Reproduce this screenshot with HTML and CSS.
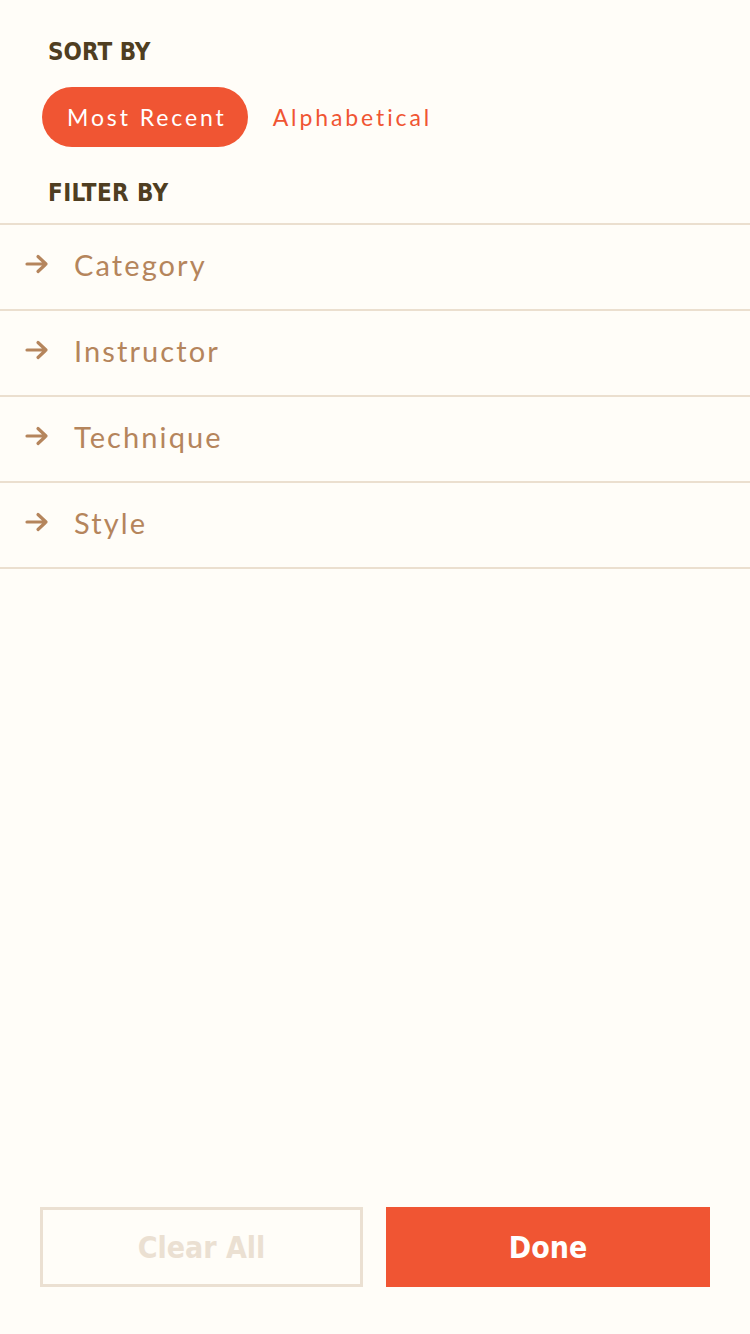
FILE: index.html
```html
<!DOCTYPE html>
<html>
<head>
<meta charset="utf-8">
<link rel="stylesheet" href="styles.css">
</head>
<body>
<div class="page">
  <div class="top">
    <h2 class="label sort-label">SORT BY</h2>
    <div class="sort-row">
      <span class="pill active">Most Recent</span>
      <span class="pill">Alphabetical</span>
    </div>
    <h2 class="label filter-label">FILTER BY</h2>
  </div>
  <ul class="filters">
    <li class="row"><svg class="arrow" viewBox="0 0 24 20"><path d="M2 10H21M13 2.5L21 10L13 17.5" fill="none" stroke="currentColor" stroke-width="3.2" stroke-linecap="round" stroke-linejoin="round"/></svg><span>Category</span></li>
    <li class="row"><svg class="arrow" viewBox="0 0 24 20"><path d="M2 10H21M13 2.5L21 10L13 17.5" fill="none" stroke="currentColor" stroke-width="3.2" stroke-linecap="round" stroke-linejoin="round"/></svg><span>Instructor</span></li>
    <li class="row"><svg class="arrow" viewBox="0 0 24 20"><path d="M2 10H21M13 2.5L21 10L13 17.5" fill="none" stroke="currentColor" stroke-width="3.2" stroke-linecap="round" stroke-linejoin="round"/></svg><span>Technique</span></li>
    <li class="row"><svg class="arrow" viewBox="0 0 24 20"><path d="M2 10H21M13 2.5L21 10L13 17.5" fill="none" stroke="currentColor" stroke-width="3.2" stroke-linecap="round" stroke-linejoin="round"/></svg><span>Style</span></li>
  </ul>
  <div class="spacer"></div>
  <div class="actions">
    <button class="btn clear">Clear All</button>
    <button class="btn done">Done</button>
  </div>
</div>
</body>
</html>
```
FILE: styles.css
```css
html, body {
  margin: 0;
  padding: 0;
  background: #fffdf8;
}
.page {
  width: 750px;
  height: 1334px;
  display: flex;
  flex-direction: column;
  font-family: "Lato", "Open Sans", sans-serif;
}
.top {
  padding: 36px 0 0 48px;
}
.label {
  margin: 0;
  font-family: "DejaVu Sans Condensed", "DejaVu Sans", sans-serif;
  font-weight: bold;
  font-size: 24px;
  line-height: 32px;
  color: #4f3e21;
  letter-spacing: 0;
}
.filter-label {
  margin-top: 30px;
  letter-spacing: 0.4px;
}
.sort-row {
  display: flex;
  align-items: center;
  gap: 25px;
  margin: 19px 0 0 -6px;
}
.pill {
  font-size: 23px;
  color: #f05533;
  letter-spacing: 2.9px;
  line-height: 60px;
  font-family: "Lato", "Open Sans", sans-serif;
}
.pill.active {
  background: #f05533;
  color: #fff;
  border-radius: 30px;
  padding: 0 21px 0 25px;
}
.filters {
  list-style: none;
  margin: 14px 0 0;
  padding: 0;
  border-top: 2px solid #ebdfcf;
}
.row {
  height: 78px;
  padding-bottom: 6px;
  border-bottom: 2px solid #ebdfcf;
  display: flex;
  align-items: center;
  color: #b5855c;
  font-size: 29px;
  letter-spacing: 2.1px;
}
.row .arrow {
  width: 24px;
  height: 20px;
  margin: 0 25px 0 25px;
  color: #b5855c;
}
.spacer {
  flex: 1;
}
.actions {
  display: flex;
  gap: 23px;
  padding: 0 40px 47px;
}
.btn {
  box-sizing: border-box;
  height: 80px;
  margin: 0;
  font-family: "DejaVu Sans Condensed", "DejaVu Sans", sans-serif;
  font-weight: bold;
  font-size: 30px;
  cursor: pointer;
}
.btn.clear {
  width: 323px;
  background: #fffdf8;
  border: 3px solid #ebe0d2;
  color: #ebe0d2;
}
.btn.done {
  width: 324px;
  background: #f05533;
  border: none;
  color: #fff;
}
```
